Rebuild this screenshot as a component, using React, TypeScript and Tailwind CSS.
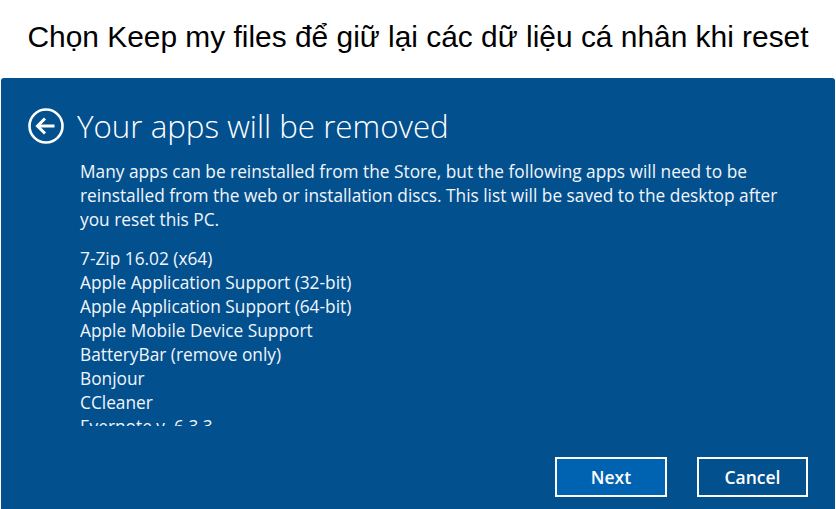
const apps = [
  "7-Zip 16.02 (x64)",
  "Apple Application Support (32-bit)",
  "Apple Application Support (64-bit)",
  "Apple Mobile Device Support",
  "BatteryBar (remove only)",
  "Bonjour",
  "CCleaner",
  "Evernote v. 6.3.3",
];

const BackIcon = () => (
  <svg width="38" height="38" viewBox="0 0 38 38" fill="none" stroke="white">
    <circle cx="19" cy="19" r="16.5" strokeWidth="2.6" />
    <path d="M10.5 19h17" strokeWidth="3" />
    <path d="M18 11.5L10.5 19l7.5 7.5" strokeWidth="3" />
  </svg>
);

export default function App() {
  return (
    <div className="w-[836px] h-[509px] flex flex-col bg-white overflow-hidden">
      <div className="h-[78px] pb-[3px] flex items-center justify-center font-['Liberation_Sans',Arial,sans-serif] text-[29.9px] text-black">
        Chọn Keep my files để giữ lại các dữ liệu cá nhân khi reset
      </div>
      <div className="flex-1 mx-[1px] rounded-t-[3px] bg-[#03508f] text-[#f2f6fa] font-['Open_Sans',sans-serif] flex flex-col">
        <div className="flex items-center gap-[12px] pl-[26px] pt-[28px]">
          <BackIcon />
          <h1 className="text-[31.3px] font-light leading-[40px] text-white">Your apps will be removed</h1>
        </div>
        <div className="pl-[79px] pr-[54px] pt-[14px] text-[17.3px] leading-[24px]">
          <p>
            Many apps can be reinstalled from the Store, but the following apps will need to be reinstalled from the web or installation discs. This list will be saved to the desktop after you reset this PC.
          </p>
          <div className="mt-[15px] h-[179px] overflow-hidden">
            {apps.map((a) => (
              <div key={a}>{a}</div>
            ))}
          </div>
        </div>
        <div className="mt-auto flex justify-end gap-[30px] pr-[27px] pb-[12px]">
          <button className="w-[112px] h-[40px] border-2 border-white bg-[#0063b1] text-[17.5px] font-semibold text-white">
            Next
          </button>
          <button className="w-[111px] h-[40px] border-2 border-white text-[17.5px] font-semibold text-white">
            Cancel
          </button>
        </div>
      </div>
    </div>
  );
}
